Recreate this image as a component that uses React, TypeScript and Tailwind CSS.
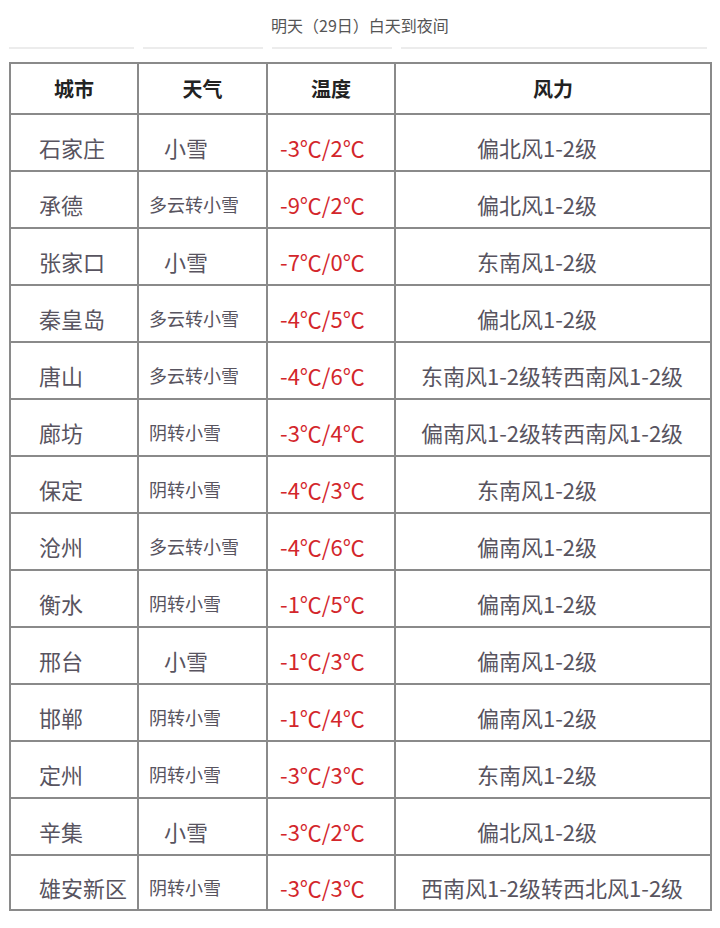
const FONT = { fontFamily: '"Noto Sans CJK SC", "Noto Sans", sans-serif' };

type Row = {
  city: string;
  weather: string;
  temp: string;
  wind: string;
};

const ROWS: Row[] = [
  { city: "石家庄", weather: "小雪", temp: "-3℃/2℃", wind: "偏北风1-2级" },
  { city: "承德", weather: "多云转小雪", temp: "-9℃/2℃", wind: "偏北风1-2级" },
  { city: "张家口", weather: "小雪", temp: "-7℃/0℃", wind: "东南风1-2级" },
  { city: "秦皇岛", weather: "多云转小雪", temp: "-4℃/5℃", wind: "偏北风1-2级" },
  { city: "唐山", weather: "多云转小雪", temp: "-4℃/6℃", wind: "东南风1-2级转西南风1-2级" },
  { city: "廊坊", weather: "阴转小雪", temp: "-3℃/4℃", wind: "偏南风1-2级转西南风1-2级" },
  { city: "保定", weather: "阴转小雪", temp: "-4℃/3℃", wind: "东南风1-2级" },
  { city: "沧州", weather: "多云转小雪", temp: "-4℃/6℃", wind: "偏南风1-2级" },
  { city: "衡水", weather: "阴转小雪", temp: "-1℃/5℃", wind: "偏南风1-2级" },
  { city: "邢台", weather: "小雪", temp: "-1℃/3℃", wind: "偏南风1-2级" },
  { city: "邯郸", weather: "阴转小雪", temp: "-1℃/4℃", wind: "偏南风1-2级" },
  { city: "定州", weather: "阴转小雪", temp: "-3℃/3℃", wind: "东南风1-2级" },
  { city: "辛集", weather: "小雪", temp: "-3℃/2℃", wind: "偏北风1-2级" },
  { city: "雄安新区", weather: "阴转小雪", temp: "-3℃/3℃", wind: "西南风1-2级转西北风1-2级" },
];

const cell = "border-2 border-[#8a8a8a] p-0 align-middle";

export default function App() {
  return (
    <div className="w-[720px] h-[928px] bg-white overflow-hidden" style={FONT}>
      <div className="pt-[13px] text-center text-[16px] leading-[24px] text-[#555]">
        明天（29日）白天到夜间
      </div>

      {/* faint ruling left over above the table */}
      <div className="mt-[10px] ml-[9px] flex gap-[9px]">
        <div className="h-[2px] w-[125px] bg-[#ececec]" />
        <div className="h-[2px] w-[120px] bg-[#ececec]" />
        <div className="h-[2px] w-[120px] bg-[#ececec]" />
        <div className="h-[2px] w-[306px] bg-[#ececec]" />
      </div>

      <table className="mt-[13px] ml-[9px] w-[701px] table-fixed border-collapse">
        <colgroup>
          <col className="w-[128px]" />
          <col className="w-[129px]" />
          <col className="w-[128px]" />
          <col className="w-[316px]" />
        </colgroup>
        <thead>
          <tr className="h-[51px]">
            {["城市", "天气", "温度", "风力"].map((h) => (
              <th
                key={h}
                className={`${cell} text-center text-[20px] font-bold text-[#222]`}
              >
                {h}
              </th>
            ))}
          </tr>
        </thead>
        <tbody>
          {ROWS.map((r, i) => {
            const short = r.weather === "小雪";
            const longWind = r.wind.length > 8;
            return (
              <tr
                key={r.city}
                className={i === ROWS.length - 1 ? "h-[55px]" : "h-[57px]"}
              >
                <td className={`${cell} pt-[10px] pl-[28px] text-[22px] text-[#58545f] whitespace-nowrap`}>
                  {r.city}
                </td>
                <td
                  className={`${cell} pt-[10px] whitespace-nowrap text-[#58545f] ${
                    short ? "pl-[25px] text-[22px]" : "pl-[10px] text-[18px]"
                  }`}
                >
                  {r.weather}
                </td>
                <td className={`${cell} pt-[10px] pl-[12px] text-[22px] text-[#d3262b] whitespace-nowrap`}>
                  {r.temp}
                </td>
                <td
                  className={`${cell} pt-[10px] text-[22px] text-[#58545f] whitespace-nowrap ${
                    longWind ? "pl-[25px]" : "pl-[81px]"
                  }`}
                >
                  {r.wind}
                </td>
              </tr>
            );
          })}
        </tbody>
      </table>
    </div>
  );
}
